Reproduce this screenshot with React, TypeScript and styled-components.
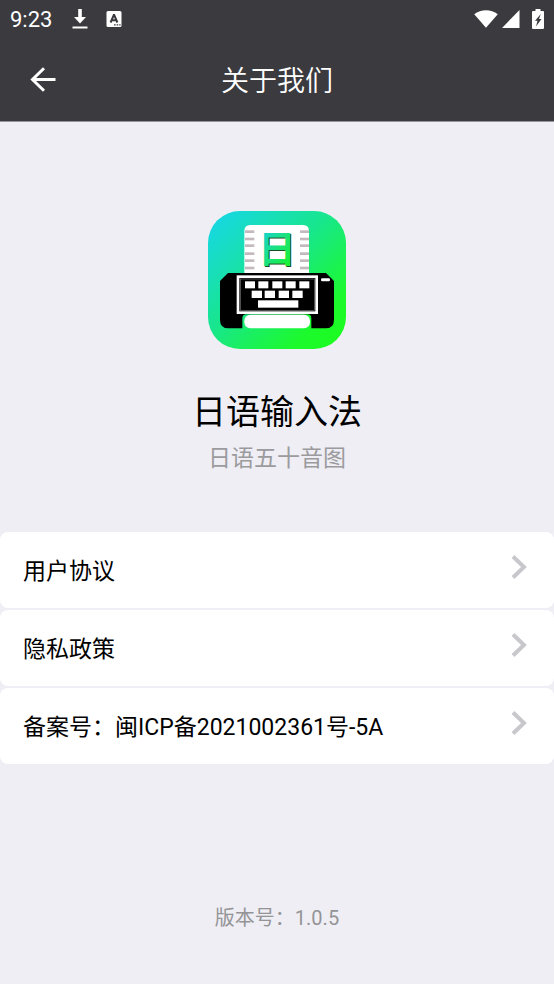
import React from "react";
import styled, { createGlobalStyle } from "styled-components";

const GlobalStyle = createGlobalStyle`
  *, *::before, *::after { box-sizing: border-box; }
  body {
    margin: 0;
    background: #efeef4;
    font-family: Roboto, "Noto Sans CJK SC", sans-serif;
    color: #000;
  }
`;

const Page = styled.div`
  min-height: 100vh;
  display: flex;
  flex-direction: column;
`;

const TopArea = styled.div`
  background: #3a3a3f;
  color: #fff;
  border-bottom: 1px solid #96939a;
`;

const StatusBar = styled.div`
  height: 38px;
  padding: 0 10px;
  display: flex;
  align-items: center;
  justify-content: space-between;
`;

const StatusGroup = styled.div<{ $gap: number }>`
  display: flex;
  align-items: center;
  gap: ${(p) => p.$gap}px;
`;

const Clock = styled.span`
  font-size: 22px;
  line-height: 24px;
  padding-top: 2px;
  font-weight: 400;
  margin-right: 2px;
`;

const NavBar = styled.header`
  height: 83px;
  padding: 0 23px;
  display: grid;
  grid-template-columns: 40px 1fr 40px;
  align-items: center;
`;

const BackButton = styled.button`
  width: 40px;
  height: 40px;
  padding: 0;
  border: 0;
  background: none;
  color: inherit;
  display: flex;
  align-items: center;
  justify-content: center;
  cursor: pointer;
`;

const Title = styled.h1`
  margin: 0;
  padding-top: 4px;
  font-size: 28px;
  line-height: 40px;
  font-weight: 350;
  text-align: center;
`;

const Intro = styled.section`
  padding: 89px 24px 56px;
  display: flex;
  flex-direction: column;
  align-items: center;
  text-align: center;
`;

const AppName = styled.h2`
  margin: 38px 0 0;
  font-size: 34px;
  line-height: 50px;
  font-weight: 400;
`;

const Tagline = styled.p`
  margin: 4px 0 0;
  font-size: 23px;
  line-height: 35px;
  color: #9b9b9e;
`;

const LinkList = styled.nav`
  display: flex;
  flex-direction: column;
  gap: 2px;
`;

const LinkRow = styled.a`
  height: 76px;
  padding: 3px 24px 0 23px;
  display: flex;
  align-items: center;
  justify-content: space-between;
  border-radius: 8px;
  background: #fff;
  color: #000;
  font-size: 23px;
  line-height: 36px;
  text-decoration: none;
`;

const RowArrow = styled.svg`
  flex: none;
  margin-bottom: 9px;
`;

const Version = styled.footer`
  margin-top: auto;
  padding: 24px 24px 50px;
  font-size: 20px;
  line-height: 32px;
  text-align: center;
  color: #949497;
`;

const DownloadIcon = () => (
  <svg width="16" height="22" viewBox="0 0 16 22" fill="#fff" aria-hidden="true">
    <path d="M6.2 1h3.6v8H14l-6 6.5L2 9h4.2z" />
    <rect x="0.5" y="18.5" width="15" height="2" />
  </svg>
);

const KeyboardIcon = () => (
  <svg width="16" height="18" viewBox="0 0 16 18" aria-hidden="true">
    <rect x="0.5" y="1" width="15" height="16" rx="1.5" fill="#fff" />
    <path
      d="M4.6 12.5 7.8 5h.4l3.2 7.5M5.6 10.2h4.8"
      fill="none"
      stroke="#3a3a3f"
      strokeWidth="2"
    />
    <path d="M8 14.2h1.6v1.4H8zM10.6 14.2h1.6v1.4h-1.6zM13.2 14.2h1.4v1.4h-1.4z" fill="#3a3a3f" />
  </svg>
);

const WifiIcon = () => (
  <svg width="24" height="18" viewBox="0 0 24 18" fill="#fff" aria-hidden="true">
    <path d="M0.2 4.2C7-1.2 17-1.2 23.8 4.2L12 17.8z" />
  </svg>
);

const SignalIcon = () => (
  <svg width="18" height="18" viewBox="0 0 18 18" fill="#fff" aria-hidden="true">
    <path d="M17.5 0v18H0z" />
  </svg>
);

const BatteryIcon = () => (
  <svg width="12" height="20" viewBox="0 0 12 20" aria-hidden="true">
    <path d="M3.5 0h5v2H11a1 1 0 0 1 1 1v16a1 1 0 0 1-1 1H1a1 1 0 0 1-1-1V3a1 1 0 0 1 1-1h2.5z" fill="#fff" />
    <path d="M8.8 5 3 11.8h2.5L4 17.5 9.5 10H7z" fill="#3a3a3f" />
  </svg>
);

const BackIcon = () => (
  <svg width="26" height="26" viewBox="0 0 26 26" fill="none" stroke="#fff" strokeWidth="3" aria-hidden="true">
    <path d="M25.5 12.5H3M14 1.3 2.5 12.5 14 23.700" />
  </svg>
);

const Chevron = () => (
  <RowArrow width="20" height="26" viewBox="0 0 20 26" fill="none" stroke="#c7c7cc" strokeWidth="4" aria-hidden="true">
    <path d="M3 2.5 14 13 3 23.5" />
  </RowArrow>
);

const marks = [94, 116, 136, 160, 181, 203];
const topKeys = [135, 175, 217, 257, 298];
const midKeys = [155, 194, 236, 277];

const AppLogo = () => (
  <svg width="138" height="138" viewBox="24 32 414 414" role="img" aria-label="日语输入法">
    <defs>
      <linearGradient id="tile" x1="0" y1="0" x2="1" y2="1">
        <stop offset="0.08" stopColor="#17d8dc" />
        <stop offset="0.45" stopColor="#18e68c" />
        <stop offset="0.8" stopColor="#1cfa2c" />
        <stop offset="1" stopColor="#1cfc1c" />
      </linearGradient>
      <linearGradient id="glyph" x1="0" y1="0" x2="1" y2="1">
        <stop offset="0.1" stopColor="#17cfe0" />
        <stop offset="0.9" stopColor="#1bf51f" />
      </linearGradient>
    </defs>
    <rect x="24" y="32" width="414" height="414" rx="96" fill="url(#tile)" />
    <path d="M133 220V92q0-18 18-18h158q18 0 18 18v128z" fill="#fff" />
    <g fill="#c4babd">
      {marks.map((y) => (
        <React.Fragment key={y}>
          <rect x="135" y={y - 4} width="28" height="8" />
          <rect x="300" y={y - 4} width="27" height="8" />
        </React.Fragment>
      ))}
    </g>
    <g fontFamily="Noto Sans CJK SC, sans-serif" fontSize="112" fontWeight="700" textAnchor="middle">
      <text x="234" y="192" fill="#174a26">日</text>
      <text x="231" y="188" fill="url(#glyph)">日</text>
    </g>
    <path
      d="M84 218h294l24 24v116q0 26-26 26h-42v-30q0-12-12-12H139q-12 0-12 12v30H86q-26 0-26-26V242z"
      fill="#000"
    />
    <rect x="133" y="343" width="197" height="41" rx="18" fill="#fff" />
    <rect x="114" y="229" width="236" height="108" fill="#000" stroke="#fff" strokeWidth="8" />
    <rect x="121" y="236" width="222" height="94" fill="none" stroke="#777" strokeWidth="2" />
    <g fill="#fff">
      {topKeys.map((x) => (
        <rect key={x} x={x} y="243" width="30" height="21" />
      ))}
      {midKeys.map((x) => (
        <rect key={x} x={x} y="271" width="31" height="22" />
      ))}
      <rect x="174" y="300" width="121" height="22" />
      <rect x="363" y="234" width="27" height="9" rx="4" />
    </g>
  </svg>
);

const links = ["用户协议", "隐私政策", "备案号：闽ICP备2021002361号-5A"];

export default function App() {
  return (
    <Page>
      <GlobalStyle />
      <TopArea>
        <StatusBar>
          <StatusGroup $gap={18}>
            <Clock>9:23</Clock>
            <DownloadIcon />
            <KeyboardIcon />
          </StatusGroup>
          <StatusGroup $gap={12}>
            <StatusGroup $gap={4}>
              <WifiIcon />
              <SignalIcon />
            </StatusGroup>
            <BatteryIcon />
          </StatusGroup>
        </StatusBar>
        <NavBar>
          <BackButton type="button" aria-label="返回">
            <BackIcon />
          </BackButton>
          <Title>关于我们</Title>
        </NavBar>
      </TopArea>
      <main>
        <Intro>
          <AppLogo />
          <AppName>日语输入法</AppName>
          <Tagline>日语五十音图</Tagline>
        </Intro>
        <LinkList>
          {links.map((label) => (
            <LinkRow key={label} href="#">
              {label}
              <Chevron />
            </LinkRow>
          ))}
        </LinkList>
      </main>
      <Version>版本号：1.0.5</Version>
    </Page>
  );
}
